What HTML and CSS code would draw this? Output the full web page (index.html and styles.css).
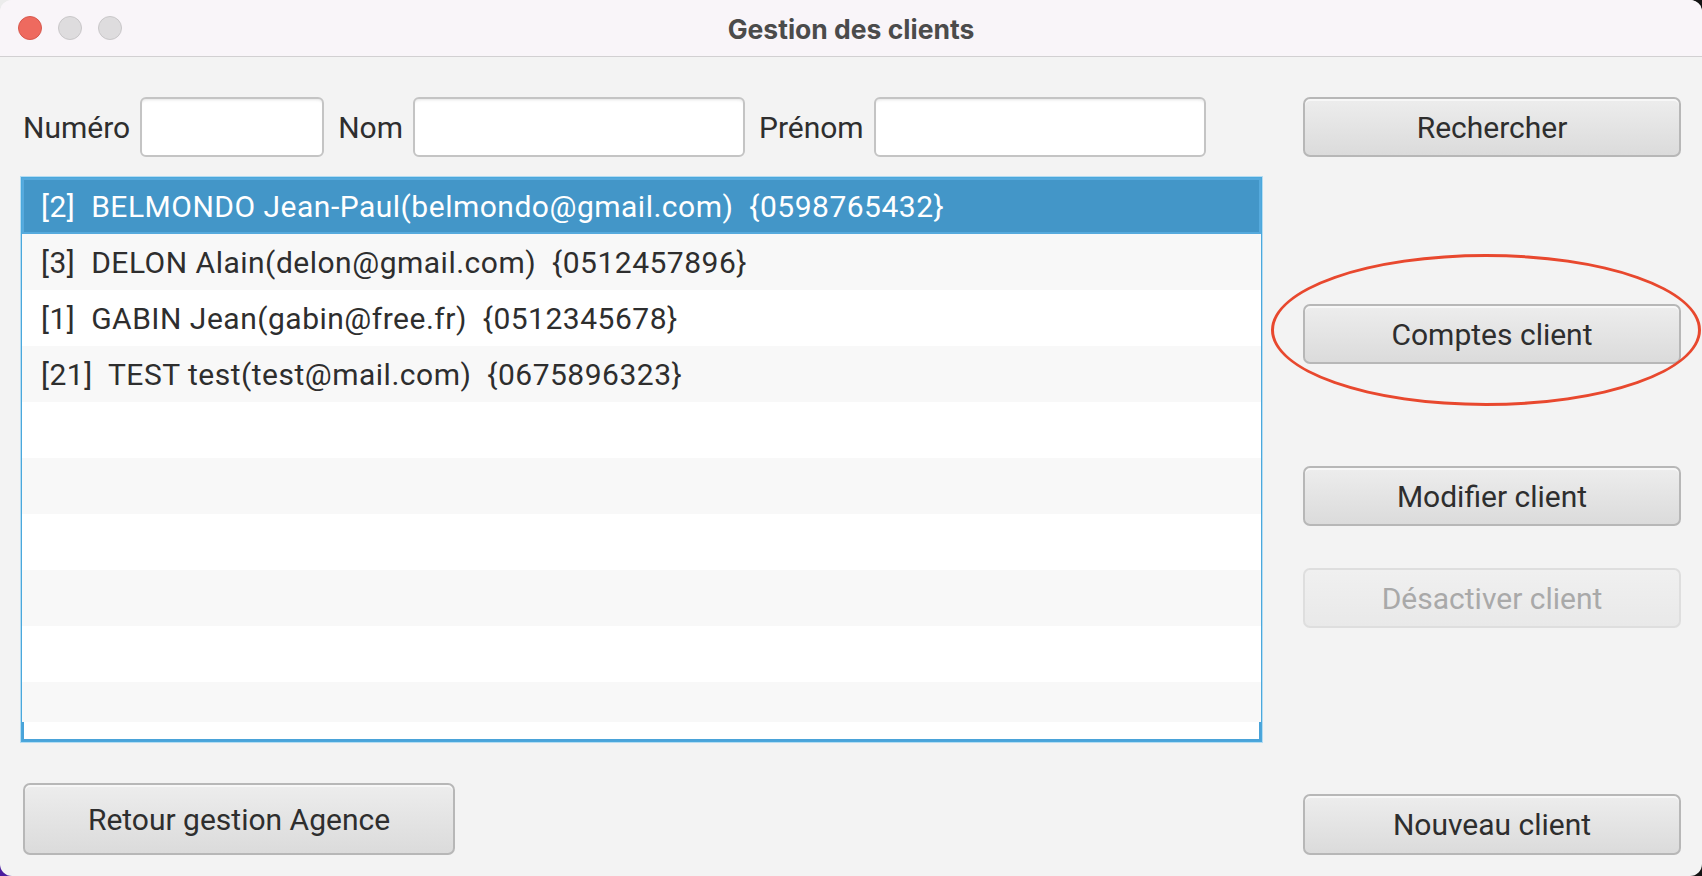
FILE: index.html
```html
<!DOCTYPE html>
<html lang="fr">
<head>
<meta charset="utf-8">
<title>Gestion des clients</title>
<link rel="stylesheet" href="styles.css">
</head>
<body>
<div class="window">
  <div class="titlebar">
    <div class="lights">
      <span class="light light-close"></span>
      <span class="light"></span>
      <span class="light"></span>
    </div>
    <div class="title">Gestion des clients</div>
    <div></div>
  </div>
  <div class="content">
    <div class="left">
      <div class="search-row">
        <span class="label">Numéro</span>
        <input class="field field-num" type="text">
        <span class="label">Nom</span>
        <input class="field field-wide" type="text">
        <span class="label">Prénom</span>
        <input class="field field-wide" type="text">
      </div>
      <div class="list">
        <div class="viewport">
          <div class="row selected">[2]  BELMONDO Jean-Paul(belmondo@gmail.com)  {0598765432}</div>
          <div class="row odd">[3]  DELON Alain(delon@gmail.com)  {0512457896}</div>
          <div class="row">[1]  GABIN Jean(gabin@free.fr)  {0512345678}</div>
          <div class="row odd">[21]  TEST test(test@mail.com)  {0675896323}</div>
          <div class="row"></div>
          <div class="row odd"></div>
          <div class="row"></div>
          <div class="row odd"></div>
          <div class="row"></div>
          <div class="row odd"></div>
        </div>
        <div class="list-foot"></div>
      </div>
      <button class="btn btn-back" type="button">Retour gestion Agence</button>
    </div>
    <div class="right">
      <button class="btn" type="button">Rechercher</button>
      <div class="annotated">
        <button class="btn" type="button">Comptes client</button>
        <span class="ring"></span>
      </div>
      <button class="btn btn-modify" type="button">Modifier client</button>
      <button class="btn btn-disabled" type="button" disabled>Désactiver client</button>
      <button class="btn btn-new" type="button">Nouveau client</button>
    </div>
  </div>
</div>
</body>
</html>
```
FILE: styles.css
```css
html, body {
  margin: 0;
  padding: 0;
  width: 1702px;
  height: 876px;
  overflow: hidden;
}

body {
  background: conic-gradient(#141414 0 50%, #4b1d9e 50% 75%, #ececec 75% 100%);
  font-family: Roboto, "Liberation Sans", sans-serif;
}

.window {
  width: 1702px;
  height: 876px;
  border-radius: 12px;
  overflow: hidden;
  background: #f3f3f3;
  display: flex;
  flex-direction: column;
}

.titlebar {
  height: 56px;
  flex: none;
  background: #f9f5f9;
  border-bottom: 1px solid #d2d0d2;
  display: grid;
  grid-template-columns: 1fr auto 1fr;
  align-items: center;
}

.lights {
  display: flex;
  gap: 16px;
  padding-left: 18px;
}

.light {
  width: 22px;
  height: 22px;
  border-radius: 50%;
  background: #dedcde;
  border: 1px solid #c9c7c9;
}

.light-close {
  background: #ee6a5f;
  border-color: #d8584d;
}

.title {
  font-family: Inter, Roboto, sans-serif;
  font-weight: 700;
  font-size: 26.5px;
  color: #4b4b4b;
  padding-top: 2px;
}

.content {
  flex: 1;
  display: grid;
  grid-template-columns: 1241px 378px;
  column-gap: 41px;
  padding: 40px 21px 21px 21px;
  min-height: 0;
}

.left {
  display: flex;
  flex-direction: column;
  min-height: 0;
}

.search-row {
  display: flex;
  align-items: center;
  height: 60px;
  flex: none;
}

.label {
  font-size: 30px;
  color: #2e2e2e;
  padding-left: 2px;
  margin-right: 10px;
}

.field {
  height: 60px;
  box-sizing: border-box;
  border: 2px solid #c4c4c4;
  border-radius: 6px;
  background: #fff;
  box-shadow: inset 0 3px 3px -2px #e4e4e4;
  margin: 0 12px 0 0;
  outline: none;
}

.field-num {
  width: 184px;
}

.field-wide {
  width: 332px;
}

.list {
  margin-top: 20px;
  height: 565px;
  flex: none;
  box-sizing: border-box;
  border: 1px solid #4aa8dc;
  box-shadow: 0 0 0 1px #b5dcf2;
  background: #fff;
  display: flex;
  flex-direction: column;
}

.viewport {
  height: 544px;
  overflow: hidden;
  flex: none;
}

.row {
  height: 56px;
  box-sizing: border-box;
  padding-left: 19px;
  display: flex;
  align-items: center;
  white-space: pre;
  font-size: 30px;
  letter-spacing: 0.5px;
  color: #2e2e2e;
  background: #fff;
}

.row.odd {
  background: #f8f8f8;
}

.row.selected {
  background: #4396c8;
  color: #fff;
  box-shadow: inset 0 0 0 2px #56aadd;
}

.list-foot {
  flex: 1;
  background: #fff;
  box-shadow: inset 2px 0 0 #4aa3d9, inset -2px 0 0 #4aa3d9, inset 0 -2px 0 #4aa3d9;
}

.btn {
  height: 60px;
  box-sizing: border-box;
  border: 2px solid #b7b7b7;
  border-radius: 7px;
  background: linear-gradient(#ededed, #dbdbdb);
  box-shadow: inset 0 2px 0 #f7f7f7;
  font-family: Roboto, "Liberation Sans", sans-serif;
  font-size: 30px;
  color: #2e2e2e;
  padding: 0;
  margin: 0;
  width: 100%;
}

.btn-back {
  margin-top: 41px;
  width: 432px;
  height: 72px;
  margin-left: 2px;
}

.right {
  display: flex;
  flex-direction: column;
}

.annotated {
  position: relative;
  margin-top: 147px;
}

.ring {
  position: absolute;
  left: -32px;
  top: -50px;
  width: 430px;
  height: 152px;
  box-sizing: border-box;
  border: 3px solid #e8482e;
  border-radius: 50%;
  pointer-events: none;
}

.btn-modify {
  margin-top: 102px;
}

.btn-disabled {
  margin-top: 42px;
  border-color: #dedede;
  background: linear-gradient(#f0f0f0, #e9e9e9);
  box-shadow: none;
  color: #a9a9a9;
}

.btn-new {
  margin-top: auto;
  height: 61px;
}
```
